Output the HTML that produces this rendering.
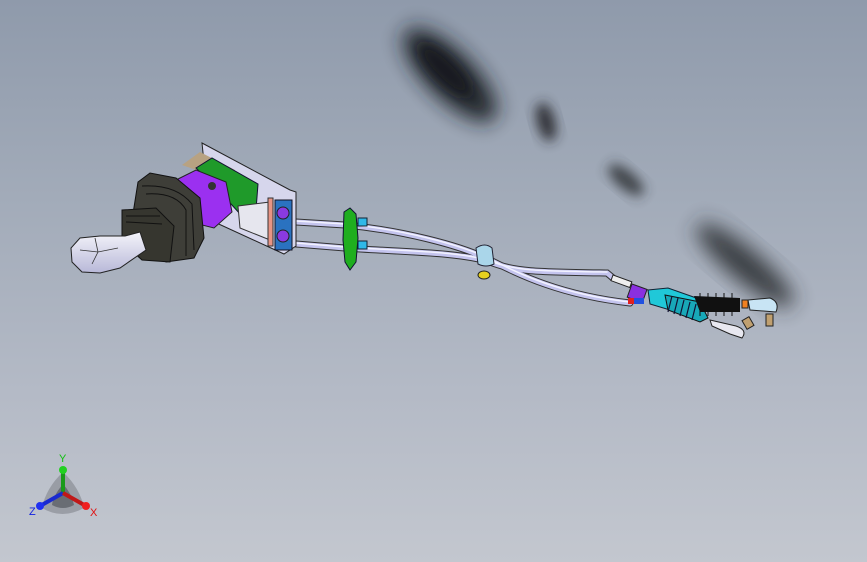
<!DOCTYPE html>
<html><head><meta charset="utf-8"><style>
html,body{margin:0;padding:0;width:867px;height:562px;overflow:hidden}
body{background:linear-gradient(180deg,#8f9aab 0%,#a2abb9 35%,#b4bac6 70%,#c3c7cf 100%);font-family:"Liberation Sans",sans-serif}
svg{position:absolute;left:0;top:0}
</style></head><body>
<svg width="867" height="562" viewBox="0 0 867 562">
<defs>
<filter id="b1" x="-50%" y="-50%" width="200%" height="200%"><feGaussianBlur stdDeviation="10"/></filter>
<filter id="b2" x="-50%" y="-50%" width="200%" height="200%"><feGaussianBlur stdDeviation="6"/></filter>
<linearGradient id="knob" x1="0" y1="0" x2="0" y2="1"><stop offset="0" stop-color="#f4f4fa"/><stop offset="1" stop-color="#b8b8d8"/></linearGradient>
</defs>
<!-- shadows -->
<g>
<ellipse cx="450" cy="75" rx="62" ry="24" transform="rotate(45 450 75)" fill="#1e2026" filter="url(#b1)" opacity="0.95"/>
<ellipse cx="445" cy="70" rx="35" ry="12" transform="rotate(45 445 70)" fill="#15171b" filter="url(#b2)" opacity="0.8"/>
<ellipse cx="546" cy="122" rx="9" ry="20" transform="rotate(-15 546 122)" fill="#25272c" filter="url(#b2)" opacity="0.9"/>
<ellipse cx="626" cy="180" rx="22" ry="9" transform="rotate(40 626 180)" fill="#2d3035" filter="url(#b2)" opacity="0.85"/>
<ellipse cx="745" cy="265" rx="62" ry="16" transform="rotate(40 745 265)" fill="#2d3036" filter="url(#b1)" opacity="0.9"/>
</g>
<!-- cables -->
<g fill="none" stroke-linecap="round">
<path d="M296 222 L345 225 C400 230 460 245 490 260 C520 275 560 295 630 303" stroke="#333" stroke-width="7"/>
<path d="M296 244 L345 248 C400 252 460 252 490 262 C515 272 540 272 607 273 L613 278" stroke="#333" stroke-width="7"/>
<path d="M296 222 L345 225 C400 230 460 245 490 260 C520 275 560 295 630 303" stroke="#c4c4ee" stroke-width="5"/>
<path d="M296 244 L345 248 C400 252 460 252 490 262 C515 272 540 272 607 273 L613 278" stroke="#c4c4ee" stroke-width="5"/>
<path d="M296 221 L345 224 C400 229 460 244 490 259 C520 274 560 294 630 302" stroke="#f2f2ff" stroke-width="1.5"/>
<path d="M296 243 L345 247 C400 251 460 251 490 261 C515 271 540 271 607 272" stroke="#f2f2ff" stroke-width="1.5"/>
</g>
<!-- green bracket -->
<path d="M344 212 L350 208 L356 214 L358 238 L356 262 L350 270 L345 262 L343 240 Z" fill="#1fae1f" stroke="#113" stroke-width="1"/>
<rect x="358" y="218" width="9" height="8" fill="#2fb8e8" stroke="#123"/>
<rect x="358" y="241" width="9" height="8" fill="#2fb8e8" stroke="#123"/>
<!-- clamp -->
<path d="M476 248 Q485 242 492 248 L494 264 Q486 268 478 264 Z" fill="#aad6ea" stroke="#223" stroke-width="1"/>
<ellipse cx="484" cy="275" rx="6" ry="4" fill="#e6d020" stroke="#222"/>
<!-- shifter housing -->
<path d="M202 143 L290 190 L296 192 L296 246 L284 254 L210 220 Z" fill="#d6d6ec" stroke="#222" stroke-width="1"/>
<path d="M182 165 L200 152 L235 170 L225 180 Z" fill="#b8a282"/>
<path d="M196 168 L212 158 L258 184 L256 210 L240 214 L222 194 Z" fill="#1f9a2a" stroke="#113"/>
<path d="M238 206 L270 202 L270 240 L240 228 Z" fill="#e6e6ee" stroke="#333"/>
<rect x="268" y="198" width="5" height="48" fill="#e89484" stroke="#333"/>
<rect x="275" y="200" width="17" height="50" fill="#2a72c0" stroke="#112"/>
<circle cx="283" cy="213" r="6" fill="#8a3ae0" stroke="#222"/>
<circle cx="283" cy="236" r="6" fill="#8a3ae0" stroke="#222"/>
<!-- purple hub -->
<path d="M172 182 L196 170 L226 182 L232 212 L214 228 L190 222 Z" fill="#9b30f0" stroke="#222" stroke-width="1"/>
<circle cx="212" cy="186" r="4" fill="#333"/>
<!-- boot -->
<path d="M138 182 L150 173 L176 178 L200 198 L204 238 L194 258 L166 262 L142 244 L132 220 Z" fill="#3e3e38" stroke="#111" stroke-width="1"/>
<path d="M122 210 L156 208 L174 226 L170 262 L142 260 L122 242 Z" fill="#36362f" stroke="#111"/>
<g stroke="#111" fill="none" stroke-width="1">
<path d="M142 186 Q176 184 192 204 L194 250"/><path d="M146 194 Q176 192 186 210 L186 256"/><path d="M126 216 L160 216"/><path d="M126 222 L162 224"/>
</g>
<!-- knob -->
<path d="M125 236 L140 232 L146 250 L120 268 L100 273 L82 272 L72 262 L71 248 L80 238 L100 236 Z" fill="url(#knob)" stroke="#222" stroke-width="1"/>
<path d="M95 238 L98 252 L92 264 M80 250 L98 252 L118 248" fill="none" stroke="#333" stroke-width="0.8"/>
<!-- end assembly -->
<rect x="613" y="275" width="20" height="6" fill="#eee" stroke="#222" transform="rotate(20 613 275)"/>
<rect x="632" y="284" width="16" height="14" fill="#8a30e0" stroke="#222" transform="rotate(20 632 284)"/>
<rect x="628" y="298" width="6" height="6" fill="#e02020"/>
<rect x="634" y="298" width="10" height="6" fill="#2050e0"/>
<path d="M648 290 L668 288 L702 300 L700 312 L690 316 L650 304 Z" fill="#20c8d8" stroke="#123"/>
<path d="M665 295 L700 302 L708 318 L700 322 L668 310 Z" fill="#18a8b8" stroke="#111"/>
<g stroke="#113" stroke-width="1.2"><path d="M672 296 L668 312M678 298 L674 314M684 300 L680 316M690 302 L686 318M696 304 L692 320"/></g>
<path d="M694 296 L740 298 L740 312 L700 312 Z" fill="#111"/>
<g stroke="#111" stroke-width="1"><path d="M700 293 L700 316M708 293 L708 316M716 293 L716 316M724 293 L724 316M732 293 L732 316"/></g>
<rect x="742" y="300" width="6" height="8" fill="#f08020" stroke="#222"/>
<path d="M748 300 L770 298 Q780 302 776 312 L750 310 Z" fill="#c8e4f4" stroke="#222"/>
<rect x="766" y="314" width="7" height="12" fill="#c0a070" stroke="#222"/>
<path d="M710 320 L736 326 Q748 330 742 338 L730 334 L712 326 Z" fill="#e8e8f0" stroke="#222"/>
<rect x="744" y="318" width="8" height="10" fill="#c0a070" stroke="#222" transform="rotate(-30 748 323)"/>
<!-- triad -->
<path d="M63 472 Q46 488 42 508 Q62 520 84 508 Q80 488 63 472 Z" fill="#7b7f86" opacity="0.55"/>
<path d="M63 484 Q53 496 52 505 Q63 511 74 505 Q72 494 63 484 Z" fill="#4a4d53" opacity="0.6"/>
<line x1="63" y1="493" x2="63" y2="470" stroke="#1a9a1a" stroke-width="4"/>
<circle cx="63" cy="470" r="4" fill="#22d022"/>
<line x1="63" y1="493" x2="40" y2="506" stroke="#1a2ad0" stroke-width="4"/>
<circle cx="40" cy="506" r="4" fill="#2030f0"/>
<line x1="63" y1="493" x2="86" y2="506" stroke="#c01818" stroke-width="4"/>
<circle cx="86" cy="506" r="4" fill="#f02020"/>
<text x="59" y="462" font-size="11" fill="#10c010" font-family="Liberation Sans">Y</text>
<text x="29" y="515" font-size="11" fill="#1020e0" font-family="Liberation Sans">Z</text>
<text x="90" y="516" font-size="11" fill="#e01010" font-family="Liberation Sans">X</text>
</svg>
</body></html>
